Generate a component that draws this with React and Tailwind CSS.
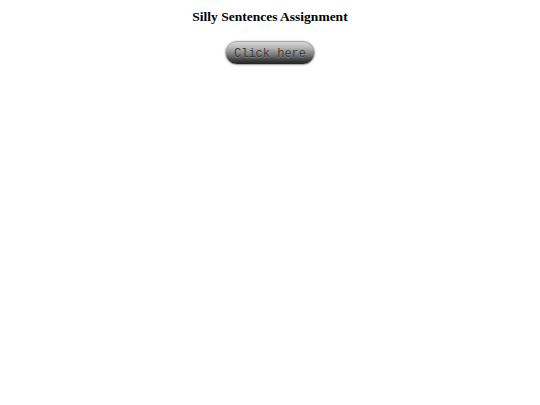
export default function App() {
  return (
    <div className="flex min-h-[405px] flex-col items-center bg-white">
      <h1 className="mt-[10px] text-[13.5px] font-bold leading-[14px] text-black [font-family:'Liberation_Serif',serif]">
        Silly Sentences Assignment
      </h1>
      <button className="mt-[17px] h-[24px] w-[90px] rounded-full border border-[#a8a8a8] bg-[linear-gradient(to_bottom,#d8d8d8_0%,#b8b8b8_25%,#808080_55%,#404040_82%,#222222_100%)] pt-[2px] text-[12px] leading-none text-[#3c3c3c] shadow-[0_0_2px_rgba(0,0,0,0.3)] [font-family:'Liberation_Mono',monospace] [text-shadow:0_1px_0_rgba(255,255,255,0.2)]">
        Click here
      </button>
    </div>
  )
}
